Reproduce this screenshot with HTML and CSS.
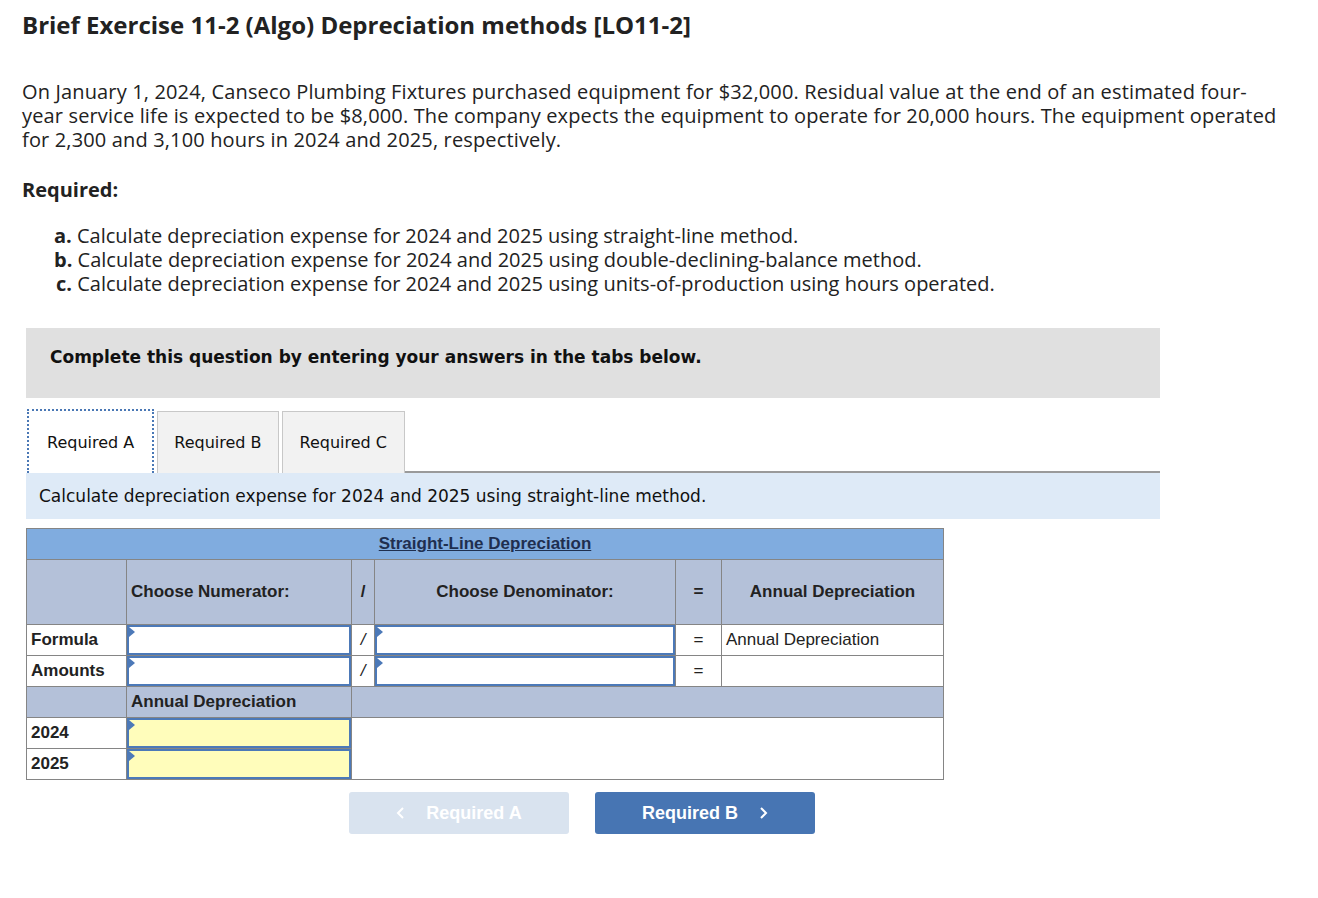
FILE: index.html
```html
<!DOCTYPE html>
<html lang="en">
	<head>
		<meta charset="UTF-8" />
		<title>Brief Exercise 11-2</title>
		<link rel="stylesheet" href="styles.css">
	</head>
	<body>
		<div class="page">
			<h1 class="title">Brief Exercise 11-2 (Algo) Depreciation methods [LO11-2]</h1>
			<p class="intro">On January 1, 2024, Canseco Plumbing Fixtures purchased equipment for $32,000. Residual value at the end of an estimated four-year service life is expected to be $8,000. The company expects the equipment to operate for 20,000 hours. The equipment operated for 2,300 and 3,100 hours in 2024 and 2025, respectively.</p>
			<p class="required">Required:</p>
			<p class="tasks">
				<b>a.</b> Calculate depreciation expense for 2024 and 2025 using straight-line method.<br>
				<b>b.</b> Calculate depreciation expense for 2024 and 2025 using double-declining-balance method.<br>
				<b class="c">c.</b> Calculate depreciation expense for 2024 and 2025 using units-of-production using hours operated.
			</p>

			<div class="notice">Complete this question by entering your answers in the tabs below.</div>

			<div class="tabs">
				<button class="tab active">Required A</button>
				<button class="tab">Required B</button>
				<button class="tab">Required C</button>
				<div class="tab-rest"></div>
			</div>
			<div class="instruction">Calculate depreciation expense for 2024 and 2025 using straight-line method.</div>

			<table class="grid">
				<colgroup>
					<col style="width:100px">
					<col style="width:225px">
					<col style="width:23px">
					<col style="width:301px">
					<col style="width:46px">
					<col style="width:222px">
				</colgroup>
				<tr class="head-main">
					<th colspan="6"><u>Straight-Line Depreciation</u></th>
				</tr>
				<tr class="head-sub tall">
					<th></th>
					<th class="left">Choose Numerator:</th>
					<th>/</th>
					<th>Choose Denominator:</th>
					<th>=</th>
					<th>Annual Depreciation</th>
				</tr>
				<tr>
					<td class="label">Formula</td>
					<td class="entry"><div class="field"></div></td>
					<td class="op"><i>/</i></td>
					<td class="entry"><div class="field"></div></td>
					<td class="op">=</td>
					<td class="text">Annual Depreciation</td>
				</tr>
				<tr>
					<td class="label">Amounts</td>
					<td class="entry"><div class="field"></div></td>
					<td class="op"><i>/</i></td>
					<td class="entry"><div class="field"></div></td>
					<td class="op">=</td>
					<td class="text"></td>
				</tr>
				<tr class="head-sub mid">
					<th></th>
					<th class="left">Annual Depreciation</th>
					<th colspan="4"></th>
				</tr>
				<tr>
					<td class="label">2024</td>
					<td class="entry"><div class="field yellow"></div></td>
					<td colspan="4" rowspan="2" class="blank"></td>
				</tr>
				<tr>
					<td class="label">2025</td>
					<td class="entry"><div class="field yellow"></div></td>
				</tr>
			</table>

			<div class="nav">
				<button class="nav-btn prev">
					<svg width="10" height="14" viewBox="0 0 10 14"><path d="M7 2 L2 7 L7 12" fill="none" stroke="#fff" stroke-width="2"/></svg>
					<span>Required A</span>
				</button>
				<button class="nav-btn next">
					<span>Required B</span>
					<svg width="10" height="14" viewBox="0 0 10 14"><path d="M3 2 L8 7 L3 12" fill="none" stroke="#fff" stroke-width="2"/></svg>
				</button>
			</div>
		</div>
	</body>
</html>
```

FILE: styles.css
```css
body {
	margin: 0;
	background: #fff;
	color: #222;
	font-family: "Open Sans", Lato, sans-serif;
}

.page {
	padding: 10px 22px 40px 22px;
}

.title {
	margin: 0;
	font-size: 24px;
	line-height: 29px;
	font-weight: 700;
	color: #222;
}

.intro {
	margin: 41px 0 0 0;
	width: 1258px;
	font-size: 20px;
	line-height: 24px;
	letter-spacing: 0.15px;
}

.required {
	margin: 26px 0 0 0;
	font-size: 20px;
	line-height: 24px;
	font-weight: 700;
}

.tasks {
	margin: 22px 0 0 0;
	padding-left: 32px;
	font-size: 20px;
	line-height: 24px;

	.c {
		margin-left: 2px;
	}
}

.notice {
	margin: 32px 0 0 4px;
	width: 1134px;
	height: 70px;
	box-sizing: border-box;
	padding: 19px 24px 0 24px;
	background: #e0e0e0;
	font-family: "DejaVu Sans", Verdana, sans-serif;
	font-size: 17px;
	font-weight: 700;
	color: #111;
}

.tabs {
	display: flex;
	align-items: flex-end;
	margin: 11px 0 0 4px;
	width: 1134px;
}

.tab {
	height: 62px;
	margin: 0 3px 0 0;
	padding: 0 16px;
	background: #f2f2f2;
	border: 1px solid #c8c8c8;
	border-bottom: none;
	font-family: "DejaVu Sans", Verdana, sans-serif;
	font-size: 16px;
	color: #111;
	cursor: pointer;
}

.tab:last-of-type {
	padding: 0 17px;
}

.tab.active {
	background: #fff;
	border: 2px dotted #4a78b5;
	border-bottom: none;
	margin-left: 1px;
	padding: 0 18px;
	height: 64px;
}

.tab-rest {
	flex: 1;
	border-bottom: 2px solid #9a9a9a;
	margin-left: -3px;
}

.instruction {
	margin: 0 0 0 4px;
	width: 1134px;
	height: 46px;
	box-sizing: border-box;
	padding: 13px 13px 0 13px;
	background: #deeaf7;
	font-family: "DejaVu Sans", Verdana, sans-serif;
	font-size: 17px;
	color: #111;
}

.grid {
	margin: 9px 0 0 4px;
	border-collapse: collapse;
	table-layout: fixed;
	width: 917px;
	font-family: "Liberation Sans", Arial, sans-serif;
	font-size: 17px;
	color: #222;

	th,
	td {
		border: 1px solid #858585;
		padding: 0 4px;
		height: 29px;
	}

	th {
		background: #b4c1d9;
		font-weight: 700;
		text-align: center;
	}

	.left {
		text-align: left;
	}
}

.head-main th {
	background: #80acdf;
	height: 30px;
	color: #1f2f4f;
}

.head-sub.tall th {
	height: 64px;
}

.head-sub.mid th {
	height: 30px;
}

.label {
	font-weight: 700;
}

.op {
	text-align: center;
}

.entry {
	padding: 0 !important;
}

.field {
	position: relative;
	height: 26px;
	border: 2px solid #4c79b8;
	background: #fff;
}

.field::before {
	content: "";
	position: absolute;
	left: 0;
	top: 0;
	border-top: 5px solid transparent;
	border-bottom: 5px solid transparent;
	border-left: 6px solid #4c79b8;
}

.field.yellow {
	background: #fffdbb;
}

.blank {
	background: #fff;
}

.nav {
	display: flex;
	gap: 26px;
	margin: 12px 0 0 327px;
}

.nav-btn {
	display: flex;
	align-items: center;
	justify-content: center;
	gap: 20px;
	width: 220px;
	height: 42px;
	border: none;
	border-radius: 3px;
	color: #fff;
	font-family: "Liberation Sans", Arial, sans-serif;
	font-size: 18px;
	font-weight: 700;
}

.prev {
	background: #d9e3ef;
}

.next {
	background: #4775b3;
	cursor: pointer;
}
```
